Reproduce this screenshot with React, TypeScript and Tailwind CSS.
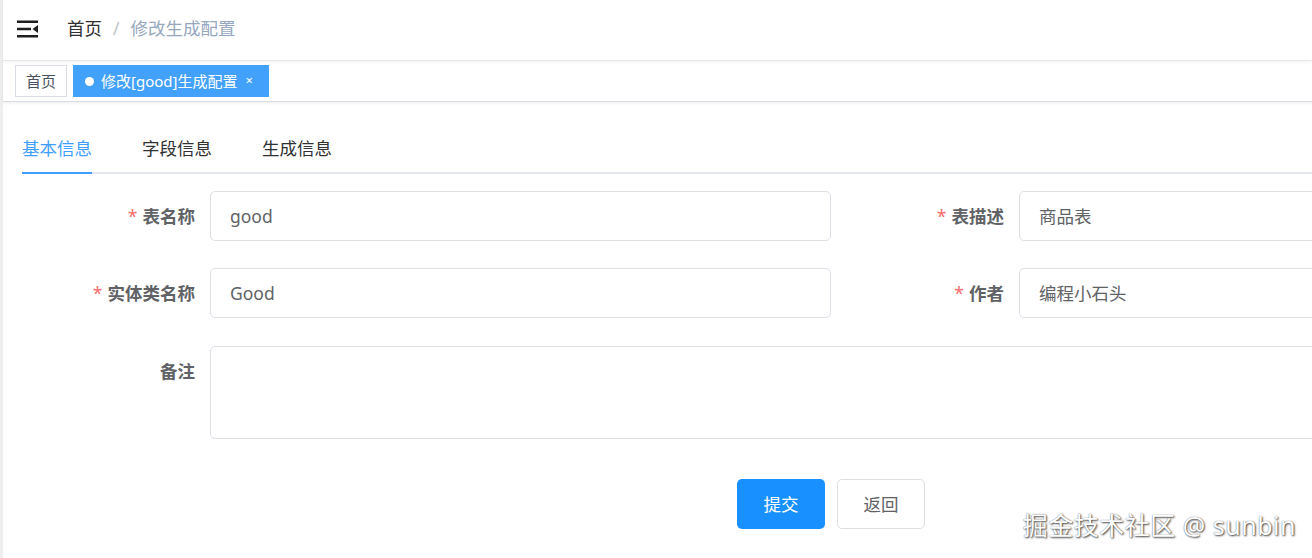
import React from "react";

const font = { fontFamily: '"Noto Sans", "Noto Sans CJK SC", sans-serif' };

function Hamburger() {
  return (
    <svg width="22" height="18" viewBox="0 0 22 18" className="block">
      <rect x="0" y="0.5" width="21" height="2.5" fill="#1f1f1f" />
      <rect x="0" y="7.75" width="14" height="2.5" fill="#1f1f1f" />
      <polygon points="15.5,9 21,5 21,13" fill="#1f1f1f" />
      <rect x="0" y="15" width="21" height="2.5" fill="#1f1f1f" />
    </svg>
  );
}

function Label({ text, required }: { text: string; required?: boolean }) {
  return (
    <div className="w-[188px] shrink-0 pr-[15px] text-right text-[17.5px] font-bold text-[#606266] leading-[50px]">
      {required && <span className="text-[#f56c6c] mr-[5px] font-normal">*</span>}
      {text}
    </div>
  );
}

function Input({ value }: { value: string }) {
  return (
    <div className="w-[621px] shrink-0 h-[50px] border border-[#dcdfe6] rounded-[5px] px-[19px] flex items-center text-[17.5px] text-[#606266] bg-white">
      {value}
    </div>
  );
}

export default function App() {
  return (
    <div className="w-[1312px] h-[558px] overflow-hidden bg-white flex" style={font}>
      <div className="w-[3px] shrink-0 bg-[#eeeeee]" />
      <div className="flex-1 flex flex-col min-w-0">
        {/* navbar */}
        <div className="h-[61px] shrink-0 flex items-center border-b border-[#eaeaea] shadow-[0_1px_4px_rgba(0,21,41,0.06)]">
          <div className="pl-[14px] pr-[28px] -mt-[2px]">
            <Hamburger />
          </div>
          <div className="text-[17.5px] flex items-center -mt-[3px]">
            <span className="text-[#303133]">首页</span>
            <span className="text-[#c0c4cc] mx-[11px]">/</span>
            <span className="text-[#97a8be]">修改生成配置</span>
          </div>
        </div>
        {/* tags view */}
        <div className="h-[41px] shrink-0 flex items-center gap-[6px] pl-[12px] border-b border-[#d8dce5] shadow-[0_1px_3px_0_rgba(0,0,0,0.08)]">
          <div className="h-[32px] px-[10px] border border-[#d8dce5] flex items-center text-[15px] text-[#495060] bg-white">
            首页
          </div>
          <div className="h-[32px] w-[196px] pl-[11px] bg-[#42a1fb] border border-[#42a1fb] flex items-center text-[15px] text-white">
            <span className="w-[9px] h-[9px] rounded-full bg-white mr-[7px]" />
            修改[good]生成配置
            <span className="ml-[8px] text-[13px]">×</span>
          </div>
        </div>
        {/* content */}
        <div className="flex-1 pl-[19px] relative">
          <div className="mt-[33px] flex border-b-2 border-[#e4e7ed] text-[17.5px] text-[#303133]">
            <div className="pb-[11px] -mb-[2px] border-b-2 border-[#409eff] text-[#409eff]">基本信息</div>
            <div className="ml-[50px] pb-[11px]">字段信息</div>
            <div className="ml-[50px] pb-[11px]">生成信息</div>
          </div>
          <div className="mt-[17px] flex flex-col gap-[27px]">
            <div className="flex">
              <Label text="表名称" required />
              <Input value="good" />
              <Label text="表描述" required />
              <Input value="商品表" />
            </div>
            <div className="flex">
              <Label text="实体类名称" required />
              <Input value="Good" />
              <Label text="作者" required />
              <Input value="编程小石头" />
            </div>
            <div className="mt-[1px] flex">
              <Label text="备注" />
              <div className="w-[1430px] shrink-0 h-[93px] border border-[#dcdfe6] rounded-[5px] bg-white" />
            </div>
          </div>
          <div className="mt-[40px] flex gap-[12px] pl-[715px]">
            <div className="w-[88px] h-[50px] rounded-[5px] bg-[#1890ff] text-white flex items-center justify-center text-[17.5px]">
              提交
            </div>
            <div className="w-[88px] h-[50px] rounded-[5px] border border-[#dcdfe6] text-[#606266] flex items-center justify-center text-[17.5px]">
              返回
            </div>
          </div>
          <div className="absolute right-[16px] bottom-[14px] text-[25px] tracking-[0.5px] text-white [text-shadow:1px_1px_2px_#444,0_0_1px_#666]">
            掘金技术社区 @ sunbin
          </div>
        </div>
      </div>
    </div>
  );
}
